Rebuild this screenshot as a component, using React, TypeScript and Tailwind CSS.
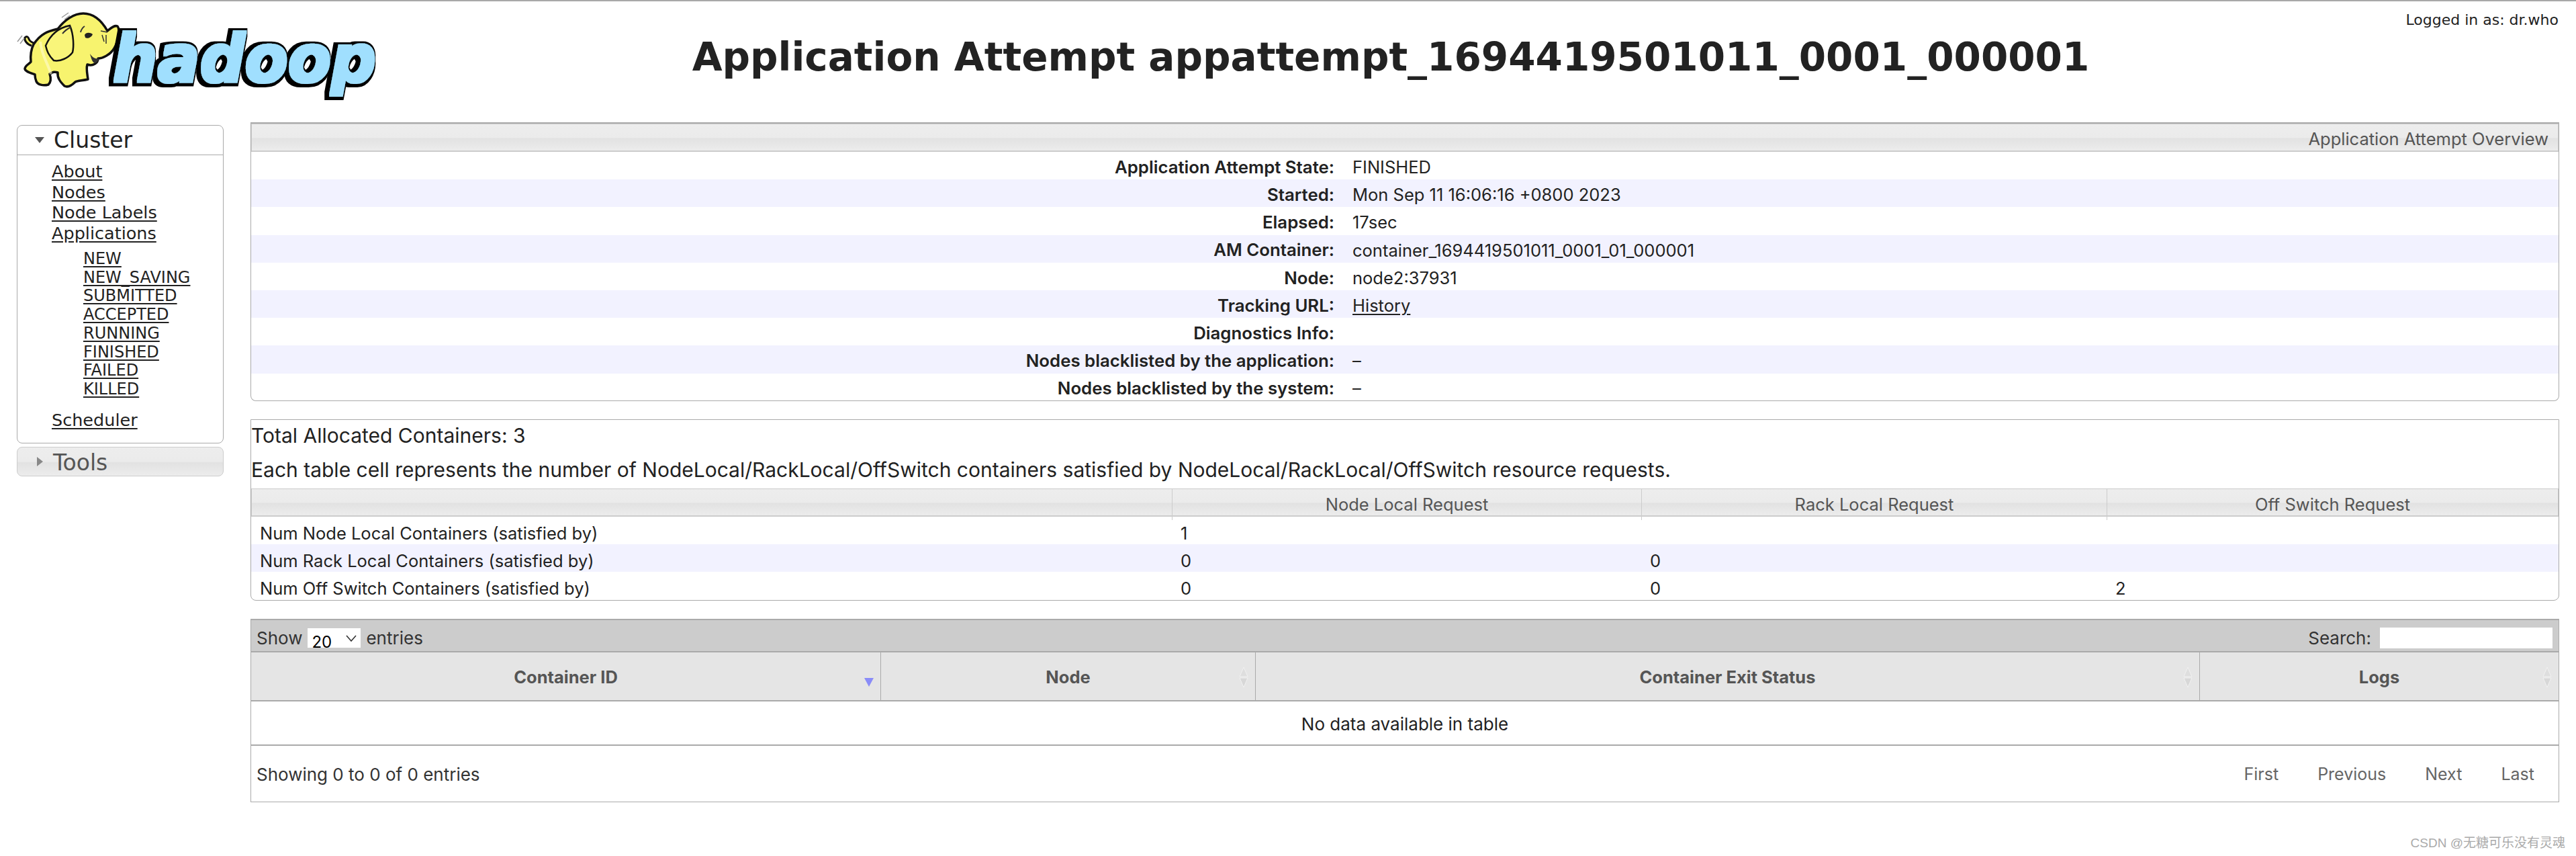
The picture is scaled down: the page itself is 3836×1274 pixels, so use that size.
const clusterLinks = ["About", "Nodes", "Node Labels", "Applications"];
const appStates = ["NEW", "NEW_SAVING", "SUBMITTED", "ACCEPTED", "RUNNING", "FINISHED", "FAILED", "KILLED"];

const overview: { label: string; value: string; link?: boolean }[] = [
  { label: "Application Attempt State:", value: "FINISHED" },
  { label: "Started:", value: "Mon Sep 11 16:06:16 +0800 2023" },
  { label: "Elapsed:", value: "17sec" },
  { label: "AM Container:", value: "container_1694419501011_0001_01_000001" },
  { label: "Node:", value: "node2:37931" },
  { label: "Tracking URL:", value: "History", link: true },
  { label: "Diagnostics Info:", value: "" },
  { label: "Nodes blacklisted by the application:", value: "–" },
  { label: "Nodes blacklisted by the system:", value: "–" },
];

const localityRows = [
  { name: "Num Node Local Containers (satisfied by)", values: ["1", "", ""] },
  { name: "Num Rack Local Containers (satisfied by)", values: ["0", "0", ""] },
  { name: "Num Off Switch Containers (satisfied by)", values: ["0", "0", "2"] },
];

const headerGradient =
  "bg-[linear-gradient(to_bottom,#ededed_0%,#ebebeb_50%,#e2e2e2_54%,#ececec_100%)]";

function HadoopLogo() {
  return (
    <svg width="580" height="170" viewBox="0 0 580 170" className="block">
      <defs>
        {/* fattens the letters and puts the black block behind them */}
        <filter id="wordmark" filterUnits="userSpaceOnUse" x="140" y="20" width="440" height="140">
          <feMorphology in="SourceAlpha" operator="dilate" radius="2" result="fat" />
          <feFlood floodColor="#a0dffe" />
          <feComposite in2="fat" operator="in" result="blue" />
          <feMorphology in="SourceAlpha" operator="dilate" radius="6" result="wide" />
          <feOffset in="wide" dx="-3" dy="1" result="moved" />
          <feFlood floodColor="#000000" />
          <feComposite in2="moved" operator="in" result="black" />
          <feMerge>
            <feMergeNode in="black" />
            <feMergeNode in="blue" />
          </feMerge>
        </filter>
      </defs>
      {/* tail */}
      <path
        d="M47 66C40 64 36 58 37 54C40 51 42 53 43 56C44 60 50 62 52 63"
        fill="#f6f26c"
        stroke="#111"
        strokeWidth="3"
      />
      <path d="M26 60L33 51M30 63L36 55M92 24L102 17M96 27L104 21" stroke="#999" strokeWidth="1.5" fill="none" />
      {/* body */}
      <path
        d="M50 64C62 46 74 44 86 41C96 28 110 18 124 18C140 18 152 30 160 44C165 40 170 35 175 37C179 42 176 60 170 70C164 80 152 85 146 85C146 92 138 97 130 94C128 100 130 108 131 116C124 118 115 118 112 120C106 126 100 128 96 126C90 120 85 114 86 106C80 104 78 106 74 108C76 114 76 120 72 124C64 126 56 124 54 119C52 114 52 112 52 109C44 106 37 104 37 100C38 95 44 93 46 90C45 80 46 72 50 64Z"
        fill="#f7f36e"
        stroke="#111"
        strokeWidth="3.5"
        strokeLinejoin="round"
      />
      {/* ear */}
      <path
        d="M68 66C74 52 84 40 104 36C110 50 110 68 108 76C102 84 90 90 80 88C72 80 70 74 68 66Z"
        fill="#f9f57a"
        stroke="#111"
        strokeWidth="2.5"
      />
      <path d="M93 48C98 42 102 40 106 38" stroke="#333" strokeWidth="2" fill="none" />
      {/* face */}
      <path d="M126 50C128 46 134 46 138 49C136 54 130 56 127 54Z" fill="#222" />
      <path d="M120 46C121 42 123 39 126 37" stroke="#333" strokeWidth="2" fill="none" />
      <path d="M150 44L160 46M152 50L155 60M158 50L158 63" stroke="#333" strokeWidth="1.5" fill="none" />
      <path d="M134 78C136 86 138 92 142 92C146 90 147 87 147 85C142 86 138 84 134 78Z" fill="#333" />
      <path d="M60 60C62 80 70 90 76 108" stroke="#fffbd0" strokeWidth="4" fill="none" opacity="0.6" />
      {/* wordmark */}
      <text
        x="168"
        y="120"
        textLength="392"
        lengthAdjust="spacingAndGlyphs"
        fontFamily="'DejaVu Sans', sans-serif"
        fontWeight="700"
        fontStyle="italic"
        fontSize="98"
        fill="#000"
        filter="url(#wordmark)"
      >
        hadoop
      </text>
    </svg>
  );
}

function SortIcon() {
  return (
    <svg width="16" height="32" viewBox="0 0 16 32" className="block">
      <path d="M8 1L14 15H2Z" fill="#dedede" stroke="#f1f1f1" strokeWidth="1" />
      <path d="M8 31L14 17H2Z" fill="#d8d8d8" stroke="#f1f1f1" strokeWidth="1" />
    </svg>
  );
}

function ContainerHead({ label, width, first }: { label: string; width: string; first?: boolean }) {
  return (
    <div className={`relative flex items-center justify-center border-[#aaaaaa] pt-[3px] ${width} ${first ? "" : "border-l"}`}>
      <span className="font-bold text-[25.5px] text-[#555555]">{label}</span>
      {first ? (
        <svg width="14" height="14" viewBox="0 0 14 14" className="absolute right-[10px] top-[37px]">
          <path d="M0 1H14L7 14Z" fill="#8a8cf8" />
        </svg>
      ) : (
        <div className="absolute right-[9px] top-[21px]">
          <SortIcon />
        </div>
      )}
    </div>
  );
}

export default function App() {
  return (
    <div className="relative h-[1274px] w-[3836px] overflow-hidden border-t-2 border-[#a8a8a8] bg-white font-['Inter','Liberation_Sans',sans-serif] text-[#222222]">
      <header className="flex h-[180px]">
        <div className="w-[580px] shrink-0">
          <HadoopLogo />
        </div>
        <h1 className="flex-1 pt-[47px] text-center font-['DejaVu_Sans',sans-serif] text-[58px] font-bold leading-[72px] text-[#222222]">
          Application Attempt appattempt_1694419501011_0001_000001
        </h1>
        <div className="w-[274px] shrink-0 pt-[14px] pr-[26px] text-right font-['DejaVu_Sans',sans-serif] text-[22px] leading-[28px]">
          Logged in as: dr.who
        </div>
      </header>

      <div className="flex gap-[40px] pr-[25px] pl-[25px]">
        <nav className="mt-[4px] w-[308px] shrink-0 font-['DejaVu_Sans',sans-serif]">
          <div className="h-[474px] rounded-[8px] border border-[#aaaaaa]">
            <div className="flex h-[44px] items-center border-b border-[#aaaaaa] pt-[1px] pl-[26px] text-[33px] text-[#222222]">
              <svg width="14" height="9" viewBox="0 0 14 9" className="mr-[14px] mt-[-1px]">
                <path d="M0 0H14L7 9Z" fill="#555555" />
              </svg>
              Cluster
            </div>
            <ul className="pt-[9px] pl-[51px] text-[25.5px] leading-[30.5px]">
              {clusterLinks.map((link) => (
                <li key={link}>
                  <a className="underline underline-offset-[3px]">{link}</a>
                </li>
              ))}
            </ul>
            <ul className="pt-[10px] pl-[98px] text-[24px] leading-[27.7px]">
              {appStates.map((state) => (
                <li key={state}>
                  <a className="underline underline-offset-[3px]">{state}</a>
                </li>
              ))}
            </ul>
            <div className="pt-[16px] pl-[51px] text-[25.5px] leading-[30.5px]">
              <a className="underline underline-offset-[3px]">Scheduler</a>
            </div>
          </div>
          <div className={`mt-[5px] flex h-[44px] items-center rounded-[8px] border border-[#cccccc] pt-[4px] pl-[29px] text-[33px] text-[#555555] ${headerGradient}`}>
            <svg width="9" height="14" viewBox="0 0 9 14" className="mr-[15px] mt-[-4px]">
              <path d="M0 0L9 7L0 14Z" fill="#888888" />
            </svg>
            Tools
          </div>
        </nav>

        <main className="w-[3438px]">
          <section className="h-[415px] rounded-b-[8px] border border-t-2 border-[#aaaaaa]">
            <div className={`h-[42px] border border-b-2 border-[#cccccc] pr-[14px] text-right text-[25.5px] leading-[43px] text-[#555555] ${headerGradient}`}>
              Application Attempt Overview
            </div>
            {overview.map((row, i) => (
              <div
                key={row.label}
                className={`flex h-[41.2px] items-center pt-[5px] text-[25.5px] ${i % 2 === 1 ? "bg-[#f2f2ff]" : ""}`}
              >
                <div className="w-[1613px] text-right text-[25.8px] font-semibold">{row.label}</div>
                <div className="pl-[27px]">
                  {row.link ? <a className="underline underline-offset-[3px]">{row.value}</a> : row.value}
                </div>
              </div>
            ))}
          </section>

          <section className="mt-[27px] h-[270px] rounded-b-[8px] border border-[#aaaaaa]">
            <div className="h-[51px] text-[30px] leading-[46px]">Total Allocated Containers: 3</div>
            <div className="h-[51px] text-[30px] leading-[46px]">
              Each table cell represents the number of NodeLocal/RackLocal/OffSwitch containers satisfied by
              NodeLocal/RackLocal/OffSwitch resource requests.
            </div>
            <div className={`grid h-[42px] grid-cols-[1370px_699px_693px_1fr] border border-b-2 border-[#cccccc] text-center text-[25.5px] leading-[46px] text-[#555555] ${headerGradient}`}>
              <div />
              <div className="border-l border-[#cccccc]">Node Local Request</div>
              <div className="border-l border-[#cccccc]">Rack Local Request</div>
              <div className="border-l border-[#cccccc]">Off Switch Request</div>
            </div>
            {localityRows.map((row, i) => (
              <div
                key={row.name}
                className={`grid h-[41.2px] grid-cols-[1370px_699px_693px_1fr] items-center pt-[6px] text-[25.5px] ${i === 1 ? "bg-[#f2f2ff]" : ""}`}
              >
                <div className="pl-[13px]">{row.name}</div>
                {row.values.map((value, j) => (
                  <div key={j} className="pl-[14px]">
                    {value}
                  </div>
                ))}
              </div>
            ))}
          </section>

          <section className="mt-[27px] h-[273px] border border-t-2 border-[#aaaaaa] text-[26px]">
            <div className="flex h-[48px] items-center justify-between border-b-2 border-[#aaaaaa] bg-[#cccccc] pt-[7px] pr-[9px] pl-[8px] text-[#333333]">
              <div className="flex items-center">
                Show
                <div className="relative mx-[8px] h-[29px] w-[79px] bg-white">
                  <select
                    defaultValue="20"
                    className="h-full w-full appearance-none bg-transparent pl-[6px] text-[24px] leading-[29px] text-black"
                  >
                    <option>20</option>
                  </select>
                  <svg width="16" height="10" viewBox="0 0 16 10" className="absolute right-[6px] top-[10px]">
                    <path d="M1 1L8 9L15 1" fill="none" stroke="#333333" strokeWidth="1.6" />
                  </svg>
                </div>
                entries
              </div>
              <div className="flex items-center">
                Search:
                <input className="ml-[13px] h-[31px] w-[257px] bg-white" />
              </div>
            </div>
            <div className="flex h-[73px] border-b-2 border-[#aaaaaa] bg-[#e5e5e5]">
              <ContainerHead label="Container ID" width="w-[937px]" first />
              <ContainerHead label="Node" width="w-[558px]" />
              <ContainerHead label="Container Exit Status" width="w-[1406px]" />
              <ContainerHead label="Logs" width="flex-1" />
            </div>
            <div className="flex h-[66px] items-center justify-center border-b-2 border-[#aaaaaa] pt-[3px]">
              No data available in table
            </div>
            <div className="flex h-[82px] items-center justify-between pt-[3px] pr-[36px] pl-[8px]">
              <span className="text-[#333333]">Showing 0 to 0 of 0 entries</span>
              <div className="flex gap-[58px] text-[25px] text-[#666666]">
                <a>First</a>
                <a>Previous</a>
                <a>Next</a>
                <a>Last</a>
              </div>
            </div>
          </section>
        </main>
      </div>

      <div className="absolute top-[1241px] right-[16px] font-['Liberation_Sans','Noto_Sans_CJK_SC',sans-serif] text-[19px] leading-[24px] text-[#aaaaaa]">
        CSDN @无糖可乐没有灵魂
      </div>
    </div>
  );
}
